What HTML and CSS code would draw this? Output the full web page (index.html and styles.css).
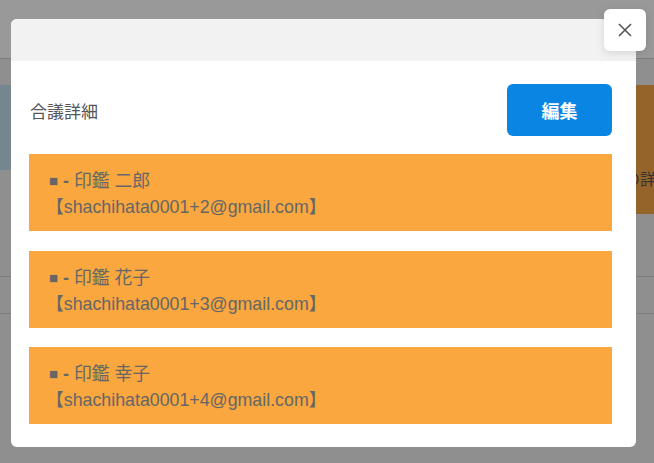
FILE: index.html
```html
<!DOCTYPE html>
<html lang="ja">
<head>
    <meta charset="UTF-8">
    <meta name="viewport" content="width=device-width, initial-scale=1.0">
    <title>合議詳細</title>
    <link rel="stylesheet" href="styles.css">
</head>
<body>
    <!-- ページ本体（モーダルの背後） -->
    <div class="page">
        <div class="page-header"></div>
        <div class="page-main">
            <div class="panel-row">
                <div class="panel panel-left"></div>
                <div class="panel panel-right">承認の詳細</div>
            </div>
            <div class="page-list">
                <div class="page-list-row"></div>
            </div>
        </div>
    </div>

    <!-- 合議詳細モーダル -->
    <div class="modal">
        <div class="modal-header"></div>
        <div class="modal-body">
            <div class="modal-top">
                <h2 class="modal-title">合議詳細</h2>
                <button class="btn-edit" type="button">編集</button>
            </div>

            <div class="member">
                <div class="member-line"><span class="mark">■</span> <b>-</b> 印鑑 二郎</div>
                <div class="member-line mail">【shachihata0001+2@gmail.com】</div>
            </div>
            <div class="member">
                <div class="member-line"><span class="mark">■</span> <b>-</b> 印鑑 花子</div>
                <div class="member-line mail">【shachihata0001+3@gmail.com】</div>
            </div>
            <div class="member">
                <div class="member-line"><span class="mark">■</span> <b>-</b> 印鑑 幸子</div>
                <div class="member-line mail">【shachihata0001+4@gmail.com】</div>
            </div>
        </div>

        <button class="btn-close" type="button" aria-label="閉じる">
            <svg width="16" height="16" viewBox="0 0 16 16">
                <path d="M2 2 L14 14 M14 2 L2 14" stroke="#555" stroke-width="1.6" fill="none"/>
            </svg>
        </button>
    </div>
</body>
</html>
```

FILE: styles.css
```css
* {
    box-sizing: border-box;
}

body {
    margin: 0;
    padding: 0;
    background-color: #8f8f8f;
    font-family: "Liberation Sans", "Noto Sans CJK JP", Arial, sans-serif;
    overflow: hidden;
}

/* 背景ページ */
.page-header {
    height: 59px;
    background-color: #999;
    border-bottom: 1px solid #7c7c7c;
}

.page-main {
    padding-top: 26px;
}

.panel-row {
    display: flex;
    justify-content: space-between;
}

.panel {
    width: 300px;
}

.panel-left {
    height: 85px;
    background-color: #75868f;
}

.panel-right {
    height: 129px;
    padding: 81px 0 0 238px;
    background-color: #95642a;
    color: #333;
    font-size: 16px;
    white-space: nowrap;
    overflow: hidden;
}

.page-list {
    margin-top: 62px;
    border-top: 1px solid #7c7c7c;
}

.page-list-row {
    height: 37px;
    border-bottom: 1px solid #7c7c7c;
}

/* モーダル */
.modal {
    position: absolute;
    top: 19px;
    left: 11px;
    width: 625px;
    background-color: #fff;
    border-radius: 6px;
}

.modal-header {
    height: 42px;
    background-color: #f2f2f2;
    border-radius: 6px 6px 0 0;
}

.modal-body {
    padding: 23px 24px 23px 18px;
}

.modal-top {
    display: flex;
    justify-content: space-between;
    align-items: center;
    margin-bottom: 18px;
}

.modal-title {
    margin: 0 0 0 1px;
    font-size: 17px;
    font-weight: normal;
    color: #555;
}

.btn-edit {
    width: 105px;
    height: 52px;
    border: none;
    border-radius: 6px;
    background-color: #0a85e4;
    color: #fff;
    font-family: inherit;
    font-size: 18px;
    font-weight: bold;
    cursor: pointer;
}

.member {
    padding: 13px 19px 10px 20px;
    margin-bottom: 19.5px;
    background-color: #f9a73e;
    color: #666;
    font-size: 17.8px;
}

.member:last-child {
    margin-bottom: 0;
}

.member-line {
    height: 27px;
    line-height: 27px;
    white-space: nowrap;
}

.mark {
    font-size: 15px;
    color: #666;
    vertical-align: 1px;
}

.mail {
    margin-left: -3px;
}

.btn-close {
    position: absolute;
    top: -10px;
    right: -10px;
    width: 42px;
    height: 42px;
    padding: 0;
    border: none;
    border-radius: 6px;
    background-color: #fff;
    box-shadow: 0 2px 8px rgba(0, 0, 0, 0.12);
    display: flex;
    align-items: center;
    justify-content: center;
    cursor: pointer;
}
```
